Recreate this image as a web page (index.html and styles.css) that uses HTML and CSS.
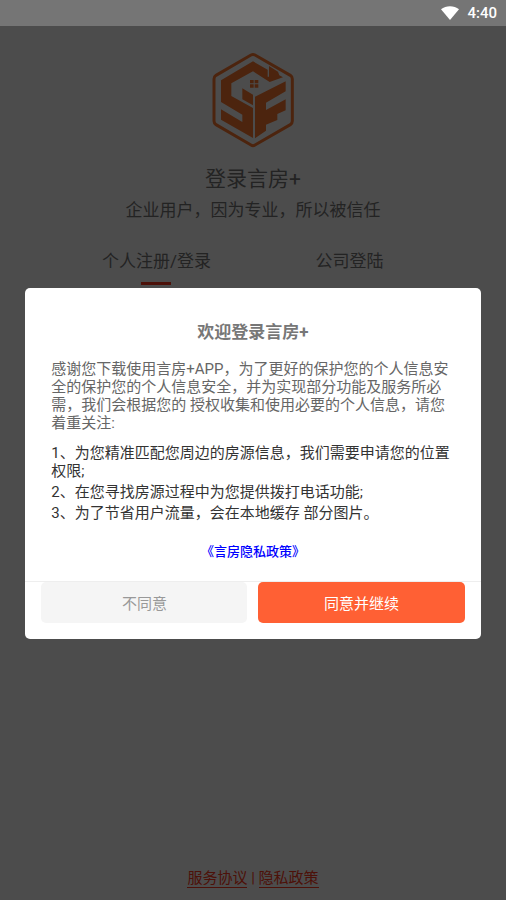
FILE: index.html
```
<!DOCTYPE html>
<html lang="zh-CN">

<head>
  <meta charset="UTF-8">
  <meta name="viewport" content="width=device-width, initial-scale=1.0">
  <title>登录言房+</title>
  <link rel="stylesheet" href="styles.css">
</head>

<body>
  <header class="status-bar">
    <svg class="wifi-icon" viewBox="0 0 18 14" aria-hidden="true">
      <path d="M0 3.2C5 -.9 13 -.9 18 3.2L9 14z" />
    </svg>
    <time>4:40</time>
  </header>

  <div class="screen">
    <main class="login">
      <svg class="logo" viewBox="36 36 246 288" aria-hidden="true">
        <path class="logo-frame" d="M153 45Q159 42 165 45L271 106Q277 110 277 117V243Q277 250 271 254L165 315Q159 319 153 315L48 254Q42 250 42 243V117Q42 110 48 106Z" />
        <path d="M63 121L159 64L203 89V110H207V78L234 95L238 106L249 112L209 126L159 94L94 130V168L159 204V294L63 239V208L127 246V224L63 186Z" />
        <path d="M127 145L159 164V196L127 178Z" />
        <path d="M165 170L257 124V154L198 188V210L257 178V211L232 222V240L198 254V272L165 295Z" />
        <path d="M150 120h11v10h-11zM164 120h11v10h-11zM150 133h11v10h-11zM164 133h11v10h-11z" />
      </svg>
      <h1>登录言房+</h1>
      <p class="slogan">企业用户，因为专业，所以被信任</p>
      <nav class="tabs">
        <button type="button" class="tab active">个人注册/登录</button>
        <button type="button" class="tab">公司登陆</button>
      </nav>
    </main>

    <footer class="agreements">
      <a href="#service">服务协议</a> | <a href="#privacy">隐私政策</a>
    </footer>

    <div class="overlay">
      <section class="dialog" role="dialog" aria-modal="true" aria-labelledby="dialog-title">
        <div class="dialog-body">
          <h2 id="dialog-title">欢迎登录言房+</h2>
          <p class="intro">感谢您下载使用言房+APP，为了更好的保护您的个人信息安全的保护您的个人信息安全，并为实现部分功能及服务所必需，我们会根据您的 授权收集和使用必要的个人信息，请您着重关注:</p>
          <div class="notes">
            <p>1、为您精准匹配您周边的房源信息，我们需要申请您的位置权限;</p>
            <p>2、在您寻找房源过程中为您提供拨打电话功能;</p>
            <p>3、为了节省用户流量，会在本地缓存 部分图片。</p>
          </div>
          <a class="policy-link" href="#privacy">《言房隐私政策》</a>
        </div>
        <div class="dialog-actions">
          <button type="button" class="btn">不同意</button>
          <button type="button" class="btn btn-primary">同意并继续</button>
        </div>
      </section>
    </div>
  </div>
</body>

</html>
```

FILE: styles.css
```
/* General Styles */
* {
  box-sizing: border-box;
}

body {
  margin: 0;
  min-height: 100vh;
  display: flex;
  flex-direction: column;
  font-family: Roboto, "Noto Sans CJK SC", sans-serif;
  font-size: 15px;
  color: #777;
  background-color: #fff;
}

h1,
h2,
p {
  margin: 0;
  font-weight: normal;
}

button {
  border: none;
  padding: 0;
  font-family: inherit;
  cursor: pointer;
}

/* Status bar */
.status-bar {
  display: flex;
  justify-content: flex-end;
  align-items: center;
  gap: 8px;
  height: 26px;
  padding: 0 9px;
  background-color: #757575;
  color: #fff;
  font-weight: 500;
}

.wifi-icon {
  width: 18px;
  height: 14px;
  fill: #fff;
}

/* Login page */
.screen {
  position: relative;
  flex: 1;
  display: flex;
  flex-direction: column;
  justify-content: space-between;
}

.login {
  display: flex;
  flex-direction: column;
  align-items: center;
  padding-top: 26px;
}

.logo {
  width: 82px;
  height: 96px;
  fill: #ff7a30;
}

.logo-frame {
  fill: none;
  stroke: #ff7a30;
  stroke-width: 9;
}

.login h1 {
  margin-top: 15px;
  font-size: 21px;
  line-height: 32px;
}

.slogan {
  font-size: 17px;
  line-height: 30px;
}

.tabs {
  align-self: stretch;
  display: grid;
  grid-template-columns: 1fr 1fr;
  justify-items: center;
  margin-top: 20px;
  padding: 0 60px;
}

.tab {
  display: flex;
  flex-direction: column;
  align-items: center;
  gap: 5px;
  background: none;
  color: inherit;
  font-size: 17px;
  line-height: 32px;
}

.tab.active::after {
  content: "";
  width: 30px;
  height: 3px;
  background-color: #ff3a20;
}

.agreements {
  padding-bottom: 12px;
  text-align: center;
  line-height: 18px;
  color: #ff3a20;
}

.agreements a {
  display: inline-block;
  border-bottom: 1px solid;
  color: inherit;
  text-decoration: none;
}

/* Privacy dialog */
.overlay {
  position: absolute;
  inset: 0;
  display: flex;
  justify-content: center;
  align-items: center;
  background-color: rgba(0, 0, 0, 0.7);
}

.dialog {
  width: 90%;
  border-radius: 5px;
  background-color: #fff;
}

.dialog-body {
  display: flex;
  flex-direction: column;
  padding: 32px 26px 18px;
}

.dialog h2 {
  text-align: center;
  font-size: 17px;
  font-weight: bold;
  line-height: 24px;
  color: #777;
}

.intro {
  margin-top: 16px;
  line-height: 18px;
  color: #666;
}

.notes {
  display: grid;
  gap: 3px;
  margin-top: 12px;
  line-height: 18px;
  color: #333;
}

.policy-link {
  align-self: center;
  margin-top: 19px;
  font-size: 13px;
  font-weight: 500;
  line-height: 22px;
  color: #00f;
  text-decoration: none;
}

.dialog-actions {
  display: grid;
  grid-template-columns: 1fr 1fr;
  gap: 11px;
  padding: 0 16px 16px;
  border-top: 1px solid #eee;
}

.btn {
  height: 41px;
  border-radius: 5px;
  background-color: #f5f5f5;
  color: #999;
  font-size: 15px;
}

.btn-primary {
  background-color: #ff6034;
  color: #fff;
}
```
